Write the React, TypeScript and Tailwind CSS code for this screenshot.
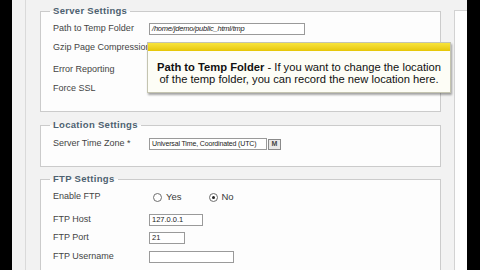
import type { ReactNode } from 'react'

const font = { fontFamily: '"Liberation Sans", Arial, sans-serif' }

function Row({ label, h, mt, children }: { label: string; h: string; mt: string; children?: ReactNode }) {
  return (
    <div className={`flex items-center ${h} ${mt}`}>
      <div className="w-[96px] shrink-0 text-[9px] text-[#444] whitespace-nowrap">{label}</div>
      {children}
    </div>
  )
}

function Radio({ checked, label }: { checked?: boolean; label: string }) {
  return (
    <div className="flex items-center gap-[4px]">
      <span className="w-[9px] h-[9px] rounded-full border border-[#6e6e6e] bg-white flex items-center justify-center">
        {checked && <span className="w-[3px] h-[3px] rounded-full bg-[#222]" />}
      </span>
      <span className="text-[9.5px] text-[#3a3a3a]">{label}</span>
    </div>
  )
}

function Box({ w, children }: { w: string; children?: ReactNode }) {
  return (
    <div className={`${w} h-[12px] border border-[#9a9a9a] bg-white flex items-center px-[2px] text-[7.5px] text-[#222] whitespace-nowrap overflow-hidden`}>
      {children}
    </div>
  )
}

function Legend({ children }: { children: ReactNode }) {
  return (
    <legend className="-ml-[3px] px-[3px] h-[12px] leading-[12px] text-[9.5px] font-bold tracking-[0.3px] text-[#4d6170]">
      {children}
    </legend>
  )
}

export default function App() {
  return (
    <div className="relative w-[480px] h-[270px] overflow-hidden flex bg-black" style={font}>
      <div className="w-[12px] shrink-0 bg-black" />
      <div className="w-[14px] shrink-0 bg-[#f2f2f2] border-r border-[#dadada]" />
      <div className="w-[427px] shrink-0 bg-[#f2f2f2] pl-[14px] pr-[12px] pt-[5px] flex flex-col">
        <fieldset className="h-[107px] border border-[#cbcbcb] bg-[#fdfdfd] px-[12px]">
          <Legend>Server Settings</Legend>
          <Row label="Path to Temp Folder" h="h-[14px]" mt="mt-[5px]">
            <Box w="w-[156px]">
              <span className="italic tracking-[-0.2px]">/home/jdemo/public_html/tmp</span>
            </Box>
          </Row>
          <Row label="Gzip Page Compression" h="h-[14px]" mt="mt-[5px]" />
          <Row label="Error Reporting" h="h-[14px]" mt="mt-[8px]" />
          <Row label="Force SSL" h="h-[14px]" mt="mt-[5px]" />
        </fieldset>

        <fieldset className="mt-[7px] h-[48px] border border-[#cbcbcb] bg-[#fdfdfd] px-[12px]">
          <Legend>Location Settings</Legend>
          <Row label="Server Time Zone *" h="h-[12px]" mt="mt-[7px]">
            <div className="flex items-center gap-[1px]">
              <Box w="w-[118px]">
                <span className="text-[7px] tracking-[-0.15px]">Universal Time, Coordinated (UTC)</span>
              </Box>
              <div className="w-[13px] h-[11px] border border-[#8a8a8a] bg-[#e8e8e8] flex items-center justify-center text-[7px] font-bold text-[#444]">
                M
              </div>
            </div>
          </Row>
        </fieldset>

        <fieldset className="mt-[6px] flex-1 border border-[#cbcbcb] border-b-0 bg-[#fdfdfd] px-[12px]">
          <Legend>FTP Settings</Legend>
          <Row label="Enable FTP" h="h-[14px]" mt="mt-[5px]">
            <div className="flex items-center gap-[27px] pl-[4px]">
              <Radio label="Yes" />
              <Radio label="No" checked />
            </div>
          </Row>
          <Row label="FTP Host" h="h-[13px]" mt="mt-[9px]">
            <Box w="w-[54px]">127.0.0.1</Box>
          </Row>
          <Row label="FTP Port" h="h-[14px]" mt="mt-[5px]">
            <Box w="w-[36px]">21</Box>
          </Row>
          <Row label="FTP Username" h="h-[14px]" mt="mt-[5px]">
            <Box w="w-[85px]" />
          </Row>
        </fieldset>
      </div>
      <div className="w-[14px] shrink-0 bg-[#f2f2f2] pt-[10px]">
        <div className="h-full ml-[1px] border-l border-t border-[#d2d2d2] bg-[#fdfdfd]" />
      </div>
      <div className="w-[13px] shrink-0 bg-black" />

      <div className="absolute left-[147px] top-[42px] w-[304px] h-[51px] flex flex-col border border-[#c4c4b0] bg-[#fdfdf6] shadow-[1px_2px_2px_rgba(0,0,0,0.35)]">
        <div className="h-[8px] shrink-0 bg-gradient-to-b from-[#f8e43a] to-[#e6c600]" />
        <div className="pt-[10px] text-center text-[11.2px] leading-[12px] text-[#111] whitespace-nowrap">
          <span className="font-bold">Path to Temp Folder</span> - If you want to change the location
          <br />
          of the temp folder, you can record the new location here.
        </div>
      </div>
    </div>
  )
}
